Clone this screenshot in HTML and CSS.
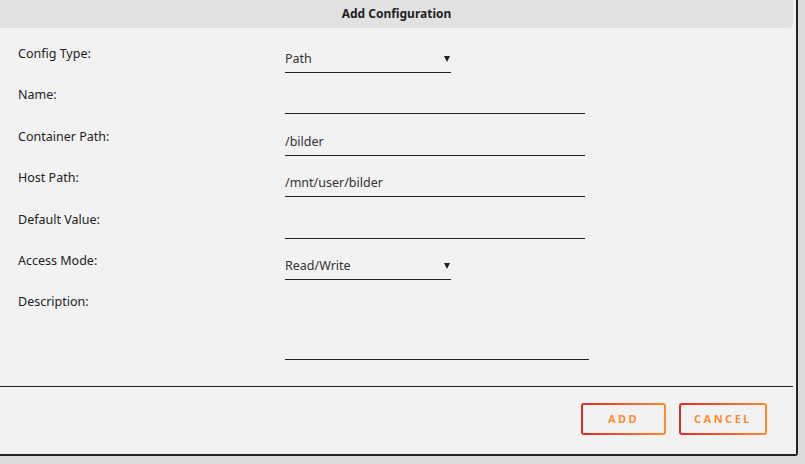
FILE: index.html
```html
<!DOCTYPE html>
<html lang="en">
<head>
    <meta charset="UTF-8">
    <meta name="viewport" content="width=device-width, initial-scale=1.0">
    <title>Add Configuration</title>
    <link rel="stylesheet" href="styles.css">
</head>
<body>
    <div class="dialog">
        <div class="dialog-title">Add Configuration</div>

        <form class="config-form">
            <div class="row">
                <label>Config Type:</label>
                <div class="field select short">
                    <span>Path</span>
                    <span class="arrow"></span>
                </div>
            </div>
            <div class="row">
                <label>Name:</label>
                <div class="field"></div>
            </div>
            <div class="row">
                <label>Container Path:</label>
                <div class="field">/bilder</div>
            </div>
            <div class="row">
                <label>Host Path:</label>
                <div class="field">/mnt/user/bilder</div>
            </div>
            <div class="row">
                <label>Default Value:</label>
                <div class="field"></div>
            </div>
            <div class="row">
                <label>Access Mode:</label>
                <div class="field select short">
                    <span>Read/Write</span>
                    <span class="arrow"></span>
                </div>
            </div>
            <div class="row">
                <label>Description:</label>
                <div class="field textarea"></div>
            </div>
        </form>

        <div class="buttons">
            <button type="button" class="btn btn-add">ADD</button>
            <button type="button" class="btn btn-cancel">CANCEL</button>
        </div>
    </div>
</body>
</html>
```

FILE: styles.css
```css
* {
    margin: 0;
    padding: 0;
    box-sizing: border-box;
}

body {
    background: #dcdcdc;
    font-family: 'Noto Sans', 'Open Sans', sans-serif;
    font-size: 12.5px;
    color: #222;
    width: 805px;
    height: 464px;
    overflow: hidden;
}

.dialog {
    width: 798px;
    height: 456px;
    background: #f2f2f2;
    border-right: 2px solid #222;
    border-bottom: 2px solid #222;
    border-bottom-right-radius: 3px;
}

.dialog-title {
    height: 28px;
    line-height: 28px;
    margin-right: 3px;
    background: #e2e2e2;
    border-bottom-right-radius: 4px;
    text-align: center;
    font-size: 12px;
    font-weight: bold;
    color: #222;
}

.config-form {
    padding: 16px 0 0 18px;
    height: 359px;
    border-bottom: 1px solid #222;
    margin-right: 3px;
}

.row {
    display: flex;
    height: 41.4px;
}

.row label {
    width: 267px;
    line-height: 20px;
    color: #222;
}

.field {
    width: 300px;
    height: 24px;
    margin-top: 5px;
    padding-bottom: 3px;
    line-height: 20px;
    border-bottom: 1px solid #222;
    color: #333;
}

.select {
    display: flex;
    justify-content: space-between;
    align-items: center;
    padding: 0 1px 3px 0;
}

.short {
    width: 166px;
}

.arrow {
    width: 0;
    height: 0;
    border-left: 3.5px solid transparent;
    border-right: 3.5px solid transparent;
    border-top: 6px solid #222;
}

.textarea {
    width: 304px;
    height: 63px;
}

.buttons {
    display: flex;
    justify-content: flex-end;
    gap: 13px;
    padding: 16px 29px 0 0;
}

.btn {
    height: 32px;
    border: 2px solid transparent;
    border-radius: 3px;
    background: linear-gradient(#f2f2f2, #f2f2f2) padding-box,
                linear-gradient(90deg, #e22828, #ff8c2f) border-box;
    color: #ff8c2f;
    font-family: 'Noto Sans', sans-serif;
    font-size: 11px;
    font-weight: bold;
    letter-spacing: 2.5px;
    line-height: 26px;
    cursor: pointer;
}

.btn-add {
    width: 85px;
}

.btn-cancel {
    width: 88px;
}
```
